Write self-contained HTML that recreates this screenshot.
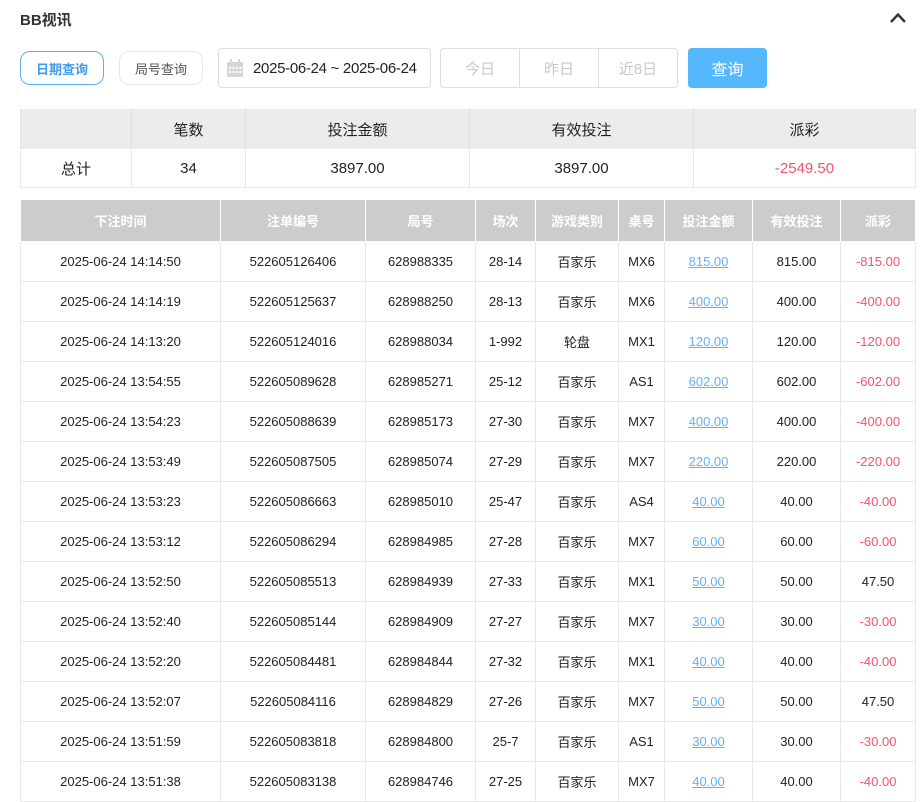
<!DOCTYPE html>
<html><head><meta charset="utf-8"><style>
*{box-sizing:border-box;margin:0;padding:0}
body{width:924px;height:793px;overflow:hidden;background:#fff;font-family:"Liberation Sans","Noto Sans CJK SC",sans-serif;color:#222;position:relative;font-size:14px}
.abs{position:absolute}
.title{left:20px;top:9px;font-size:15px;font-weight:bold;color:#333}
.btn{border-radius:10px;font-size:13px;display:flex;align-items:center;justify-content:center;height:34px;top:51px}
.date{left:218px;top:48px;width:213px;height:40px;border:1px solid #ddd;border-radius:4px;font-size:15px;display:flex;align-items:center;padding-left:34px;color:#222;letter-spacing:-0.3px}
.quick{left:440px;top:48px;width:238px;height:40px;border:1px solid #ddd;border-radius:4px;display:flex}
.quick div{flex:1;display:flex;align-items:center;justify-content:center;color:#c8c8c8;font-size:15px}
.quick div+div{border-left:1px solid #ddd}
.q{left:688px;top:48px;width:79px;height:40px;background:#55b8fd;border-radius:4px;color:#fff;font-size:16px;display:flex;align-items:center;justify-content:center}
table{border-collapse:collapse;position:absolute;left:20px;table-layout:fixed}
td,th{text-align:center;border:1px solid #e8e8e8;font-weight:normal}
.sum{top:108px;width:895px}
.sum th{background:#ececec;height:41px;font-size:15px;border-color:#fff #e0e0e0}
.sum td{height:38px;font-size:15px}
.main{top:200px;width:895px}
.main th{background:#cccccc;color:#fff;font-weight:bold;height:41px;font-size:13px;border:1px solid #fff;border-top:0}
.main td{height:40px;font-size:13px;color:#222}
.main td.l{color:#62b1f6;text-decoration:underline}
td.r,.main td.r{color:#f2556b}
</style></head><body>
<div class="abs title">BB视讯</div>
<svg class="abs" style="left:889px;top:11px" width="18" height="14" viewBox="0 0 18 14"><path d="M2 11 L9 3.5 L16 11" fill="none" stroke="#333" stroke-width="2.4"/></svg>
<div class="abs btn" style="left:20px;width:84px;border:1px solid #5ab0f5;color:#3e9cf0;font-weight:bold">日期查询</div>
<div class="abs btn" style="left:119px;width:84px;border:1px solid #e6e6e6;color:#555">局号查询</div>
<div class="abs date">2025-06-24 ~ 2025-06-24</div>
<svg class="abs" style="left:227px;top:59px" width="16" height="18" viewBox="0 0 16 18"><rect x="0" y="3" width="16" height="15" rx="1" fill="#d6d6d6"/><rect x="3" y="0" width="2" height="5" fill="#d6d6d6"/><rect x="11" y="0" width="2" height="5" fill="#d6d6d6"/><g fill="#fff"><rect x="2" y="8" width="2" height="2"/><rect x="5.5" y="8" width="2" height="2"/><rect x="9" y="8" width="2" height="2"/><rect x="12.5" y="8" width="2" height="2"/><rect x="2" y="12" width="2" height="2"/><rect x="5.5" y="12" width="2" height="2"/><rect x="9" y="12" width="2" height="2"/><rect x="12.5" y="12" width="2" height="2"/></g></svg>
<div class="abs quick"><div>今日</div><div>昨日</div><div>近8日</div></div>
<div class="abs q">查询</div>
<table class="sum"><colgroup><col style="width:111px"><col style="width:114px"><col style="width:224px"><col style="width:224px"><col style="width:222px"></colgroup>
<tr><th></th><th>笔数</th><th>投注金额</th><th>有效投注</th><th>派彩</th></tr>
<tr><td>总计</td><td>34</td><td>3897.00</td><td>3897.00</td><td class="r">-2549.50</td></tr></table>
<table class="main"><colgroup><col style="width:200px"><col style="width:145px"><col style="width:110px"><col style="width:60px"><col style="width:83px"><col style="width:46px"><col style="width:88px"><col style="width:88px"><col style="width:75px"></colgroup>
<tr><th>下注时间</th><th>注单编号</th><th>局号</th><th>场次</th><th>游戏类别</th><th>桌号</th><th>投注金额</th><th>有效投注</th><th>派彩</th></tr>
<tr><td>2025-06-24 14:14:50</td><td>522605126406</td><td>628988335</td><td>28-14</td><td>百家乐</td><td>MX6</td><td class="l">815.00</td><td>815.00</td><td class="r">-815.00</td></tr>
<tr><td>2025-06-24 14:14:19</td><td>522605125637</td><td>628988250</td><td>28-13</td><td>百家乐</td><td>MX6</td><td class="l">400.00</td><td>400.00</td><td class="r">-400.00</td></tr>
<tr><td>2025-06-24 14:13:20</td><td>522605124016</td><td>628988034</td><td>1-992</td><td>轮盘</td><td>MX1</td><td class="l">120.00</td><td>120.00</td><td class="r">-120.00</td></tr>
<tr><td>2025-06-24 13:54:55</td><td>522605089628</td><td>628985271</td><td>25-12</td><td>百家乐</td><td>AS1</td><td class="l">602.00</td><td>602.00</td><td class="r">-602.00</td></tr>
<tr><td>2025-06-24 13:54:23</td><td>522605088639</td><td>628985173</td><td>27-30</td><td>百家乐</td><td>MX7</td><td class="l">400.00</td><td>400.00</td><td class="r">-400.00</td></tr>
<tr><td>2025-06-24 13:53:49</td><td>522605087505</td><td>628985074</td><td>27-29</td><td>百家乐</td><td>MX7</td><td class="l">220.00</td><td>220.00</td><td class="r">-220.00</td></tr>
<tr><td>2025-06-24 13:53:23</td><td>522605086663</td><td>628985010</td><td>25-47</td><td>百家乐</td><td>AS4</td><td class="l">40.00</td><td>40.00</td><td class="r">-40.00</td></tr>
<tr><td>2025-06-24 13:53:12</td><td>522605086294</td><td>628984985</td><td>27-28</td><td>百家乐</td><td>MX7</td><td class="l">60.00</td><td>60.00</td><td class="r">-60.00</td></tr>
<tr><td>2025-06-24 13:52:50</td><td>522605085513</td><td>628984939</td><td>27-33</td><td>百家乐</td><td>MX1</td><td class="l">50.00</td><td>50.00</td><td>47.50</td></tr>
<tr><td>2025-06-24 13:52:40</td><td>522605085144</td><td>628984909</td><td>27-27</td><td>百家乐</td><td>MX7</td><td class="l">30.00</td><td>30.00</td><td class="r">-30.00</td></tr>
<tr><td>2025-06-24 13:52:20</td><td>522605084481</td><td>628984844</td><td>27-32</td><td>百家乐</td><td>MX1</td><td class="l">40.00</td><td>40.00</td><td class="r">-40.00</td></tr>
<tr><td>2025-06-24 13:52:07</td><td>522605084116</td><td>628984829</td><td>27-26</td><td>百家乐</td><td>MX7</td><td class="l">50.00</td><td>50.00</td><td>47.50</td></tr>
<tr><td>2025-06-24 13:51:59</td><td>522605083818</td><td>628984800</td><td>25-7</td><td>百家乐</td><td>AS1</td><td class="l">30.00</td><td>30.00</td><td class="r">-30.00</td></tr>
<tr><td>2025-06-24 13:51:38</td><td>522605083138</td><td>628984746</td><td>27-25</td><td>百家乐</td><td>MX7</td><td class="l">40.00</td><td>40.00</td><td class="r">-40.00</td></tr>
</table>
</body></html>
